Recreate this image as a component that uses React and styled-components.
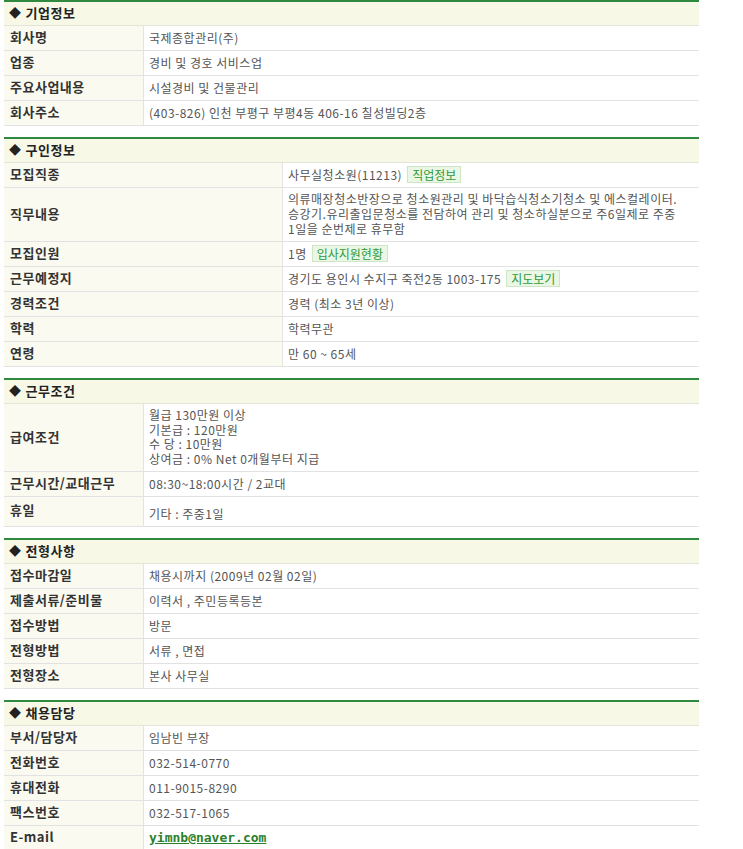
import React from "react";
import styled, { createGlobalStyle } from "styled-components";

const Global = createGlobalStyle`
  html, body { margin: 0; padding: 0; background: #fff; }
  body {
    font-family: "Noto Sans CJK KR", "Noto Sans", "Liberation Sans", sans-serif;
    font-size: 12px;
    color: #555;
  }
`;

const Page = styled.div`
  width: 695px;
  margin-left: 4px;
  display: flex;
  flex-direction: column;
  gap: 11px;
`;

const Section = styled.section`
  border-top: 2px solid #2f8a40;
  display: grid;
  grid-template-columns: ${(p) => p.$labelW}px 1fr;
`;

const Head = styled.div`
  grid-column: 1 / -1;
  height: 23px;
  box-sizing: content-box;
  display: flex;
  align-items: center;
  padding: 0 0 3px 5px;
  height: 20px;
  background: #f8f8e6;
  border-bottom: 1px solid #e4e4d8;
  font-weight: bold;
  font-size: 13px;
  line-height: 15px;
  color: #222;
  letter-spacing: 0.5px;
`;

const Diamond = styled.span`
  font-size: 12px;
  margin-right: 4px;
`;

const Label = styled.div`
  display: flex;
  align-items: ${(p) => (p.$top ? "flex-start" : "center")};
  padding: ${(p) => (p.$top ? "5px 6px 0" : "0 6px 3px")};
  min-height: 25px;
  box-sizing: border-box;
  background: #fafaf0;
  border-bottom: 1px solid #e2e2e2;
  border-right: 1px solid #e4e4e0;
  font-weight: bold;
  font-size: 13px;
  line-height: 15px;
  color: #333;
  letter-spacing: 0.5px;
`;

const Value = styled.div`
  display: flex;
  flex-direction: column;
  justify-content: center;
  padding: ${(p) => p.$pad};
  min-height: 25px;
  box-sizing: border-box;
  border-bottom: 1px solid #e2e2e2;
  line-height: ${(p) => p.$lh};
  color: #555;
  letter-spacing: 0.5px;
`;

const Inline = styled.div`
  display: flex;
  align-items: center;
  gap: 5px;
  height: 16px;
`;

const Tag = styled.span`
  display: inline-flex;
  align-items: center;
  height: 15px;
  padding: 0 4px;
  background: #eaf7e4;
  border: 1px solid #cfe6c6;
  color: #2f9a3a;
  font-size: 12px;
  letter-spacing: 0;
`;

const Mail = styled.a`
  color: #2c7f2c;
  font-weight: bold;
  font-family: "DejaVu Sans Mono", "Liberation Mono", monospace;
  font-size: 13px;
  letter-spacing: 0;
  text-decoration: underline;
`;

const data = [
  {
    title: "기업정보",
    labelW: 140,
    rows: [
      ["회사명", "국제종합관리(주)"],
      ["업종", "경비 및 경호 서비스업"],
      ["주요사업내용", "시설경비 및 건물관리"],
      ["회사주소", "(403-826) 인천 부평구 부평4동 406-16 칠성빌딩2층"],
    ],
  },
  {
    title: "구인정보",
    labelW: 279,
    rows: [
      ["모집직종", "사무실청소원(11213)", "직업정보"],
      [
        "직무내용",
        [
          "의류매장청소반장으로 청소원관리 및 바닥습식청소기청소 및 에스컬레이터.",
          "승강기.유리출입문청소를 전담하여 관리 및 청소하실분으로 주6일제로 주중",
          "1일을 순번제로 휴무함",
        ],
      ],
      ["모집인원", "1명", "입사지원현황"],
      ["근무예정지", "경기도 용인시 수지구 죽전2동 1003-175", "지도보기"],
      ["경력조건", "경력 (최소 3년 이상)"],
      ["학력", "학력무관"],
      ["연령", "만 60 ~ 65세"],
    ],
  },
  {
    title: "근무조건",
    labelW: 140,
    rows: [
      [
        "급여조건",
        ["월급 130만원 이상", "기본급 : 120만원", "수 당 : 10만원", "상여금 : 0% Net 0개월부터 지급"],
      ],
      ["근무시간/교대근무", "08:30~18:00시간 / 2교대"],
      ["휴일", "기타 : 주중1일", null, "tall"],
    ],
  },
  {
    title: "전형사항",
    labelW: 140,
    rows: [
      ["접수마감일", "채용시까지 (2009년 02월 02일)"],
      ["제출서류/준비물", "이력서 , 주민등록등본"],
      ["접수방법", "방문"],
      ["전형방법", "서류 , 면접"],
      ["전형장소", "본사 사무실"],
    ],
  },
  {
    title: "채용담당",
    labelW: 140,
    rows: [
      ["부서/담당자", "임남빈 부장"],
      ["전화번호", "032-514-0770"],
      ["휴대전화", "011-9015-8290"],
      ["팩스번호", "032-517-1065"],
      ["E-mail", "mail"],
    ],
  },
];

function Row({ label, value, tag, mode }) {
  let content;
  let pad = "3px 5px 5px";
  let lh = "15px";
  if (value === "mail") {
    content = <Mail href="#">yimnb@naver.com</Mail>;
  } else if (Array.isArray(value)) {
    content = value.map((l, i) => <div key={i}>{l}</div>);
    lh = value.length > 3 ? "14.5px" : "15px";
    pad = value.length > 3 ? "4px 5px 5px" : "3px 5px 5px";
  } else if (tag) {
    content = (
      <Inline>
        <span>{value}</span>
        <Tag>{tag}</Tag>
      </Inline>
    );
    pad = "3px 5px 5px";
  } else {
    content = <span>{value}</span>;
  }
  const tall = mode === "tall";
  if (tall) pad = "9px 5px 5px";
  return (
    <>
      <Label $top={tall}>{label}</Label>
      <Value $pad={pad} $lh={lh}>
        {content}
      </Value>
    </>
  );
}

export default function App() {
  return (
    <>
      <Global />
      <Page>
        {data.map((s) => (
          <Section key={s.title} $labelW={s.labelW}>
            <Head>
              <Diamond>◆</Diamond>
              <span>{s.title}</span>
            </Head>
            {s.rows.map((r) => (
              <Row key={r[0]} label={r[0]} value={r[1]} tag={r[2]} mode={r[3]} />
            ))}
          </Section>
        ))}
      </Page>
    </>
  );
}
